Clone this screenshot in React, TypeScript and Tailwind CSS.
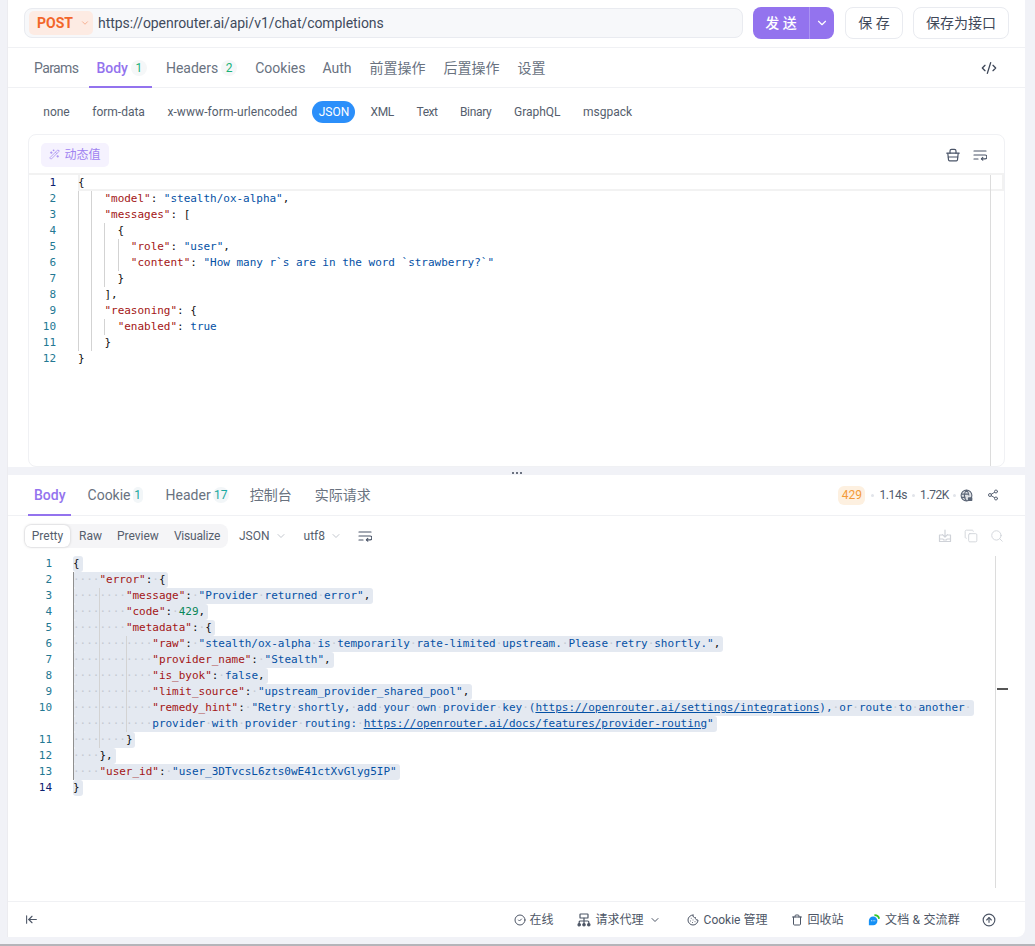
import React from "react";
import {
  ArrowLeftToLine,
  ChevronDown,
  CircleArrowUp,
  CircleCheck,
  CodeXml,
  Cookie,
  Copy,
  Search,
  Share2,
  Trash,
  WandSparkles,
} from "lucide-react";

const UI_FONT = "font-['Roboto','Noto_Sans_CJK_SC',sans-serif]";
const CODE_FONT = "font-['DejaVu_Sans_Mono','Noto_Sans_CJK_SC',monospace]";

type Tok = [string, string];

const K = "text-[#a31515]";
const S = "text-[#0451a5]";
const N = "text-[#098658]";
const P = "text-[#111111]";

const requestLines: Tok[][] = [
  [[P, "{"]],
  [[P, "    "], [K, '"model"'], [P, ": "], [S, '"stealth/ox-alpha"'], [P, ","]],
  [[P, "    "], [K, '"messages"'], [P, ": ["]],
  [[P, "      {"]],
  [[P, "        "], [K, '"role"'], [P, ": "], [S, '"user"'], [P, ","]],
  [[P, "        "], [K, '"content"'], [P, ": "], [S, '"How many r`s are in the word `strawberry?`"']],
  [[P, "      }"]],
  [[P, "    ],"]],
  [[P, "    "], [K, '"reasoning"'], [P, ": {"]],
  [[P, "      "], [K, '"enabled"'], [P, ": "], [S, "true"]],
  [[P, "    }"]],
  [[P, "}"]],
];

const responseLines: { no?: number; toks: Tok[] }[] = [
  { no: 1, toks: [[P, "{"]] },
  { no: 2, toks: [[P, "    "], [K, '"error"'], [P, ": {"]] },
  { no: 3, toks: [[P, "        "], [K, '"message"'], [P, ": "], [S, '"Provider returned error"'], [P, ","]] },
  { no: 4, toks: [[P, "        "], [K, '"code"'], [P, ": "], [N, "429"], [P, ","]] },
  { no: 5, toks: [[P, "        "], [K, '"metadata"'], [P, ": {"]] },
  { no: 6, toks: [[P, "            "], [K, '"raw"'], [P, ": "], [S, '"stealth/ox-alpha is temporarily rate-limited upstream. Please retry shortly."'], [P, ","]] },
  { no: 7, toks: [[P, "            "], [K, '"provider_name"'], [P, ": "], [S, '"Stealth"'], [P, ","]] },
  { no: 8, toks: [[P, "            "], [K, '"is_byok"'], [P, ": "], [S, "false"], [P, ","]] },
  { no: 9, toks: [[P, "            "], [K, '"limit_source"'], [P, ": "], [S, '"upstream_provider_shared_pool"'], [P, ","]] },
  { no: 10, toks: [[P, "            "], [K, '"remedy_hint"'], [P, ": "], [S, '"Retry shortly, add your own provider key ('], ["text-[#0451a5] underline", "https://openrouter.ai/settings/integrations"], [S, "), or route to another "]] },
  { toks: [[P, "            "], [S, "provider with provider routing: "], ["text-[#0451a5] underline", "https://openrouter.ai/docs/features/provider-routing"], [S, '"']] },
  { no: 11, toks: [[P, "        }"]] },
  { no: 12, toks: [[P, "    },"]] },
  { no: 13, toks: [[P, "    "], [K, '"user_id"'], [P, ": "], [S, '"user_3DTvcsL6zts0wE41ctXvGlyg5IP"']] },
  { no: 14, toks: [[P, "}"]] },
];

// spaces drawn the way the editor's renderWhitespace does it
function Dotted({ cls, text }: { cls: string; text: string }) {
  const parts = text.split(" ");
  return (
    <span className={cls}>
      {parts.map((p, i) => (
        <React.Fragment key={i}>
          {i > 0 && <span className="text-[#c5cad3] no-underline inline-block">·</span>}
          {p}
        </React.Fragment>
      ))}
    </span>
  );
}

function Badge({ children }: { children: React.ReactNode }) {
  return (
    <span className="ml-[3px] inline-flex h-[16px] w-[16px] items-center justify-center rounded-full bg-[#f5f7f8] text-[12px] font-normal text-[#19b277]">
      {children}
    </span>
  );
}

function BasketIcon() {
  return (
    <svg width="14" height="14" viewBox="0 0 14 14" fill="none" stroke="#4b5568" strokeWidth="1.200" strokeLinecap="round">
      <path d="M.8 5.200h12.400M1.800 5.200l.7 6.600a1.100 1.100 0 0 0 1.100 1h6.800a1.100 1.100 0 0 0 1.100-1l.7-6.600" />
      <path d="M4 5.200V3a1.600 1.600 0 0 1 1.600-1.600h2.800A1.600 1.600 0 0 1 10 3v2.200" />
      <path d="M2.300 9h9.400" />
    </svg>
  );
}

function WrapIcon({ color = "#4b5568" }: { color?: string }) {
  return (
    <svg width="14" height="14" viewBox="0 0 14 14" fill="none" stroke={color} strokeWidth="1.200" strokeLinecap="round" strokeLinejoin="round">
      <path d="M1 3h12M1 7h11a1.700 1.700 0 0 1 0 3.800H8.500M1 11h4" />
      <path d="M9.800 9.400l-1.400 1.400 1.400 1.400" />
    </svg>
  );
}

function GlobeLockIcon() {
  return (
    <svg width="13" height="13" viewBox="0 0 14 14" fill="none" stroke="#5b6576" strokeWidth="1.200">
      <circle cx="7" cy="7" r="5.800" fill="#7b8494" fillOpacity="0.25" />
      <path d="M1.500 5.500h8M2 9h4M7 1.300c-3 3-3 8.400 0 11.400M7 1.300c1.800 1.800 2.500 3.800 2.600 5.700" />
      <rect x="8.500" y="9" width="4.800" height="3.800" rx="0.800" fill="#5b6576" stroke="none" />
    </svg>
  );
}

function SaveFileIcon() {
  return (
    <svg width="14" height="14" viewBox="0 0 14 14" fill="none" stroke="#cfd2d8" strokeWidth="1.200" strokeLinecap="round" strokeLinejoin="round">
      <path d="M7 1v7M4.500 5.700 7 8.200l2.500-2.500" />
      <path d="M4 6H1.500v6.500h11V6H10" />
      <path d="M1.500 10h3.500l.6 1h2.800l.6-1h3.500" />
    </svg>
  );
}

function ProxyIcon() {
  return (
    <svg width="14" height="14" viewBox="0 0 14 14" fill="none" stroke="#4d5666" strokeWidth="1.200" strokeLinecap="round">
      <rect x="3" y="1" width="8" height="4" rx="0.600" />
      <path d="M7 5v6M2.200 10.500V9a1 1 0 0 1 1-1h7.600a1 1 0 0 1 1 1v1.500" />
      <circle cx="2.200" cy="11.800" r="1.200" fill="#4d5666" />
      <circle cx="7" cy="11.800" r="1.200" fill="#4d5666" />
      <circle cx="11.800" cy="11.800" r="1.200" fill="#4d5666" />
    </svg>
  );
}

function ChatLogo() {
  return (
    <svg width="12" height="12" viewBox="0 0 14 14">
      <path d="M7.500 1.300a5.500 5.500 0 0 1 5.500 4.200" fill="none" stroke="#34c724" strokeWidth="2.200" />
      <path d="M6 3a5 5 0 0 1 5 5 5 5 0 0 1-5 5H1V8a5 5 0 0 1 5-5z" fill="#1590f5" />
      <circle cx="4" cy="8" r="0.600" fill="#fff" />
      <circle cx="6" cy="8" r="0.600" fill="#fff" />
      <circle cx="8" cy="8" r="0.600" fill="#fff" />
    </svg>
  );
}

function RequestBar() {
  return (
    <div className="flex h-[47px] shrink-0 items-start gap-[10px] pl-4 pt-[7px]">
      <div className="mt-px flex h-[30px] w-[719px] items-center rounded-[8px] border border-[#e9ebf0] bg-[#f7f8fa] pl-[4px]">
        <div className="flex h-[24px] w-[64px] items-center gap-[7px] rounded-[5px] bg-[#fdebe3] pl-[8px] text-[14px] font-bold text-[#f2662a]">
          POST
          <ChevronDown size={10} className="text-[#f5a583]" strokeWidth={2} />
        </div>
        <span className="ml-[5px] mt-px text-[14px] tracking-[-0.06px] text-[#414b5d]">https://openrouter.ai/api/v1/chat/completions</span>
      </div>
      <div className="flex h-[32px] w-[81px] items-center rounded-[8px] bg-[#9373ee] text-[14px] font-medium text-white">
        <span className="w-[56px] text-center">发 送</span>
        <span className="flex h-full flex-1 items-center justify-center border-l border-[#ab94f3]">
          <ChevronDown size={14} />
        </span>
      </div>
      <div className="ml-px flex h-[32px] w-[58px] items-center justify-center rounded-[8px] border border-[#e9ebf0] text-[14px] text-[#3f4859]">保 存</div>
      <div className="flex h-[32px] w-[96px] items-center justify-center rounded-[8px] border border-[#e9ebf0] text-[14px] text-[#3f4859]">保存为接口</div>
    </div>
  );
}

function RequestTabs() {
  return (
    <div className="flex h-[41px] shrink-0 items-stretch border-y border-[#f0f1f4] pt-px text-[14px] text-[#69727f]">
      <span className="ml-[26px] flex items-center tracking-[-0.6px]">Params</span>
      <span className="relative ml-[18px] flex items-center font-medium text-[#9373ee]">
        Body
        <Badge>1</Badge>
        <span className="absolute -bottom-px -left-[7px] h-[2px] w-[63px] bg-[#9373ee]" />
      </span>
      <span className="ml-[19px] flex items-center">
        Headers
        <Badge>2</Badge>
      </span>
      <span className="ml-[18px] flex items-center">Cookies</span>
      <span className="ml-[17px] flex items-center">Auth</span>
      <span className="ml-[18px] flex items-center">前置操作</span>
      <span className="ml-[18px] flex items-center">后置操作</span>
      <span className="ml-[18px] flex items-center">设置</span>
      <span className="ml-auto mr-[28px] flex items-center text-[#3f4859]">
        <CodeXml size={16} />
      </span>
    </div>
  );
}

function BodyTypes() {
  return (
    <div className="flex h-[46px] shrink-0 items-center pl-[24px] pt-px text-[12px] text-[#555e6d]">
      <span className="px-[11.250px]">none</span>
      <span className="px-[11.250px]">form-data</span>
      <span className="px-[11.250px] tracking-[0.09px]">x-www-form-urlencoded</span>
      <span className="mx-[3.750px] flex h-[22px] w-[43px] items-center justify-center rounded-full bg-[#2b8ffa] text-white">JSON</span>
      <span className="px-[11.250px] tracking-[-0.3px]">XML</span>
      <span className="px-[11.250px] tracking-[-0.5px]">Text</span>
      <span className="px-[11.250px] tracking-[-0.3px]">Binary</span>
      <span className="px-[11.250px]">GraphQL</span>
      <span className="px-[11.250px]">msgpack</span>
    </div>
  );
}

function RequestEditor() {
  return (
    <div className="relative mx-5 flex h-[333px] shrink-0 flex-col overflow-hidden rounded-[8px] border border-[#f0f1f4]">
      <div className="flex h-[38px] shrink-0 items-center justify-between pl-[12px] pr-[17px] pt-px">
        <span className="flex h-[24px] w-[68px] items-center justify-center gap-[4px] rounded-[5px] bg-[#f5f2fe] text-[12px] text-[#9f83f1]">
          <WandSparkles size={11} strokeWidth={1.500} />
          动态值
        </span>
        <span className="flex items-center gap-[13px]">
          <BasketIcon />
          <WrapIcon />
        </span>
      </div>
      <div className={`flex flex-1 border-t-2 border-[#f2f2f2] text-[11px] leading-[16px] tracking-[-0.02px] ${CODE_FONT}`}>
        <div className="w-[49px] shrink-0 pr-[22px] text-right text-[#237893]">
          {requestLines.map((_, i) => (
            <div key={i} className={`h-4 ${i === 0 ? "text-[#0b216f]" : ""}`}>{i + 1}</div>
          ))}
        </div>
        <div className="relative flex-1 whitespace-pre">
          <div className="absolute left-0 top-0 h-4 w-[926px] border-2 border-t-0 border-[#f2f2f2]" />
          <div className="absolute left-[0px] top-[16px] h-[160px] w-px bg-[#d3d3d3]" />
          <div className="absolute left-[13px] top-[16px] h-[160px] w-px bg-[#d3d3d3]" />
          <div className="absolute left-[26px] top-[48px] h-[64px] w-px bg-[#d3d3d3]" />
          <div className="absolute left-[26px] top-[144px] h-[16px] w-px bg-[#d3d3d3]" />
          <div className="absolute left-[40px] top-[64px] h-[32px] w-px bg-[#d3d3d3]" />
          <div className="absolute left-[912px] top-0 h-full w-px bg-[#dcdcdc]" />
          {requestLines.map((toks, i) => (
            <div key={i} className="relative h-4">
              {toks.map(([cls, text], j) => (
                <span key={j} className={cls}>{text}</span>
              ))}
            </div>
          ))}
        </div>
      </div>
    </div>
  );
}

function ResponseTabs() {
  return (
    <div className="flex h-[41px] shrink-0 items-stretch border-b border-[#f0f1f4] text-[14px] text-[#69727f]">
      <span className="relative ml-[26px] flex items-center font-medium text-[#9373ee]">
        Body
        <span className="absolute -bottom-px -left-[6px] h-[2px] w-[43px] bg-[#9373ee]" />
      </span>
      <span className="ml-[22px] flex items-center">
        Cookie
        <span className="ml-[2px] flex h-[16px] w-[10px] items-center justify-center rounded-full bg-[#f2f6f8] text-[12px] text-[#18a9a0]">1</span>
      </span>
      <span className="ml-[23px] flex items-center">
        Header
        <span className="ml-[2px] flex h-[16px] w-[16px] items-center justify-center rounded-full bg-[#f2f6f8] text-[12px] text-[#18a9a0]">17</span>
      </span>
      <span className="ml-[21px] flex items-center">控制台</span>
      <span className="ml-[23px] flex items-center">实际请求</span>
      <span className="ml-auto mr-[26px] flex items-center text-[12px] tracking-[-0.4px] text-[#525c6d]">
        <span className="flex h-[19px] w-[27px] items-center justify-center rounded-[6px] bg-[#fdf0e0] tracking-normal text-[#f39a38]">429</span>
        <span className="mx-[5.500px] h-[3px] w-[3px] rounded-full bg-[#e1e4ea]" />
        1.14s
        <span className="mx-[5px] h-[3px] w-[3px] rounded-full bg-[#e1e4ea]" />
        1.72K
        <span className="mx-[4px] h-[3px] w-[3px] rounded-full bg-[#e1e4ea]" />
        <GlobeLockIcon />
        <Share2 size={12} className="ml-[14px] text-[#5b6576]" />
      </span>
    </div>
  );
}

function ResponseToolbar() {
  return (
    <div className="flex h-[39px] shrink-0 items-center pl-4 pr-[21px] text-[12px] text-[#555e6d]">
      <div className="flex h-[24px] w-[204px] items-center rounded-[8px] bg-[#f5f5f7] pl-px">
        <span className="flex h-[22px] w-[45px] items-center justify-center rounded-[6px] bg-white shadow-[0_0_3px_rgba(0,0,0,0.18)]">Pretty</span>
        <span className="ml-[9px]">Raw</span>
        <span className="ml-[15px]">Preview</span>
        <span className="ml-[15px] tracking-[-0.2px]">Visualize</span>
      </div>
      <span className="ml-[11px] flex items-center gap-[5px]">JSON <ChevronDown size={12} className="text-[#c3c7ce]" /></span>
      <span className="ml-[17px] flex items-center gap-[5px]">utf8 <ChevronDown size={12} className="text-[#c3c7ce]" /></span>
      <span className="ml-[16px]"><WrapIcon /></span>
      <span className="ml-auto flex items-center gap-[12px] text-[#cfd2d8]">
        <SaveFileIcon />
        <Copy size={14} strokeWidth={1.500} />
        <Search size={14} strokeWidth={1.500} />
      </span>
    </div>
  );
}

function ResponseEditor() {
  return (
    <div className={`flex h-[346px] shrink-0 pt-px text-[11px] leading-[16px] tracking-[-0.02px] ${CODE_FONT}`}>
      <div className="w-[65px] shrink-0 pr-[21px] text-right text-[#237893]">
        {responseLines.map((l, i) => (
          <div key={i} className={`h-4 ${l.no === 14 ? "text-[#0b216f]" : ""}`}>{l.no ?? ""}</div>
        ))}
      </div>
      <div className="relative flex-1 whitespace-pre">
        {responseLines.map((l, i) => (
          <div key={i} className="h-4">
            <span className="inline-block h-4 rounded-[3px] bg-[#e4e9f1] pr-[3px]">
              {l.toks.map(([cls, text], j) => (
                <Dotted key={j} cls={cls} text={text} />
              ))}
            </span>
          </div>
        ))}
        <div className="absolute left-0 top-[16px] h-[208px] w-px bg-[#8f8f8f]" />
        <div className="absolute left-[26px] top-[32px] h-[160px] w-px bg-[#d3d3d3]" />
        <div className="absolute left-[53px] top-[80px] h-[96px] w-px bg-[#d3d3d3]" />
        <div className="absolute left-[922px] top-0 h-[332px] w-px bg-[#dcdcdc]" />
        <div className="absolute left-[924px] top-[132px] h-[2px] w-[11px] bg-[#555555]" />
      </div>
    </div>
  );
}

function Footer() {
  return (
    <div className="mt-auto flex h-[36px] shrink-0 items-center border-t border-[#f0f1f4] pl-[17px] pr-[29px] text-[12px] text-[#4d5666]">
      <ArrowLeftToLine size={13} className="text-[#4d5666]" />
      <span className="ml-auto flex items-center gap-[4px]"><CircleCheck size={12} />在线</span>
      <span className="ml-[23px] flex items-center gap-[5px]"><ProxyIcon />请求代理<ChevronDown size={12} /></span>
      <span className="ml-[26px] flex items-center gap-[5px]"><Cookie size={12} />Cookie 管理</span>
      <span className="ml-[24px] flex items-center gap-[4px]"><Trash size={12} />回收站</span>
      <span className="ml-[25px] flex items-center gap-[4.500px]"><ChatLogo /><span className="tracking-[0.2px]">文档 &amp; 交流群</span></span>
      <CircleArrowUp size={14} className="ml-[22px]" />
    </div>
  );
}

export default function App() {
  return (
    <div className={`h-[946px] w-full overflow-hidden border-b-2 border-[#b5b5ba] bg-[#f1f2f7] ${UI_FONT}`}>
      <div className="ml-[7px] flex h-[937px] w-[1018px] flex-col rounded-br-[8px] border-l border-[#ececf0] bg-white">
        <RequestBar />
        <RequestTabs />
        <BodyTypes />
        <RequestEditor />
        <div className="relative h-[8px] shrink-0 bg-[#f1f2f7]">
          <span className="absolute left-[504px] top-[5px] h-[2px] w-[10px] border-t-2 border-dotted border-[#6b7280]" />
        </div>
        <ResponseTabs />
        <ResponseToolbar />
        <ResponseEditor />
        <Footer />
      </div>
    </div>
  );
}
